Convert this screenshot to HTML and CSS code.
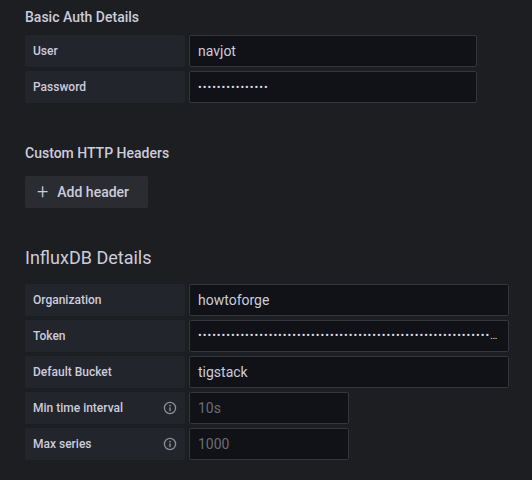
FILE: index.html
```html
<!DOCTYPE html>
<html>
<head>
<meta charset="utf-8">
<link rel="stylesheet" href="styles.css">
</head>
<body>
<div class="page">
  <h3 class="sub-title">Basic Auth Details</h3>
  <div class="rows">
    <div class="row">
      <div class="label">User</div>
      <div class="input w288">navjot</div>
    </div>
    <div class="row">
      <div class="label">Password</div>
      <div class="input w288 dots">•••••••••••••••</div>
    </div>
  </div>

  <h3 class="sub-title headers-title">Custom HTTP Headers</h3>
  <button class="btn"><span class="plus">+</span>Add header</button>

  <h2 class="section-title">InfluxDB Details</h2>
  <div class="rows">
    <div class="row">
      <div class="label">Organization</div>
      <div class="input w320">howtoforge</div>
    </div>
    <div class="row">
      <div class="label">Token</div>
      <div class="input w320 dots ellip">••••••••••••••••••••••••••••••••••••••••••••••••••••••••••••••••••••••••••••••••••••••</div>
    </div>
    <div class="row">
      <div class="label">Default Bucket</div>
      <div class="input w320">tigstack</div>
    </div>
    <div class="row">
      <div class="label">Min time interval
        <svg class="info" width="14" height="14" viewBox="0 0 14 14"><circle cx="7" cy="7" r="5.6" fill="none" stroke="currentColor" stroke-width="1.3"/><circle cx="7" cy="4.6" r="0.9" fill="currentColor"/><rect x="6.25" y="6.2" width="1.5" height="4" rx="0.6" fill="currentColor"/></svg>
      </div>
      <div class="input w160 placeholder">10s</div>
    </div>
    <div class="row">
      <div class="label">Max series
        <svg class="info" width="14" height="14" viewBox="0 0 14 14"><circle cx="7" cy="7" r="5.6" fill="none" stroke="currentColor" stroke-width="1.3"/><circle cx="7" cy="4.6" r="0.9" fill="currentColor"/><rect x="6.25" y="6.2" width="1.5" height="4" rx="0.6" fill="currentColor"/></svg>
      </div>
      <div class="input w160 placeholder">1000</div>
    </div>
  </div>
</div>
</body>
</html>
```

FILE: styles.css
```css
html, body {
  margin: 0;
  padding: 0;
  background: #1d1e22;
}
body {
  font-family: Roboto, "Liberation Sans", sans-serif;
  color: #ccccdc;
  width: 532px;
  height: 480px;
  overflow: hidden;
}
.page {
  padding: 8px 0 0 25px;
}
.sub-title {
  margin: 0 0 9px 0;
  font-size: 14px;
  line-height: 18px;
  font-weight: 500;
  color: #ccccdc;
}
.headers-title {
  margin-top: 41px;
  margin-bottom: 14px;
}
.section-title {
  margin: 38px 0 14px 0;
  font-size: 18px;
  line-height: 24px;
  font-weight: 400;
  color: #ccccdc;
}
.rows {
  display: flex;
  flex-direction: column;
  gap: 4px;
}
.row {
  display: flex;
  gap: 4px;
  height: 32px;
}
.label {
  box-sizing: border-box;
  width: 160px;
  height: 32px;
  padding: 0 8px;
  background: #22252b;
  border-radius: 2px;
  display: flex;
  align-items: center;
  justify-content: space-between;
  font-size: 12px;
  font-weight: 500;
  color: #ccccdc;
}
.info {
  color: #8e8e96;
}
.input {
  box-sizing: border-box;
  height: 32px;
  padding: 0 8px;
  background: #111217;
  border: 1px solid #35363b;
  border-radius: 2px;
  display: flex;
  align-items: center;
  font-size: 14px;
  color: #ccccdc;
  white-space: nowrap;
  overflow: hidden;
}
.w288 { width: 288px; }
.w320 { width: 320px; }
.w160 { width: 160px; }
.dots {
  font-size: 11px;
  letter-spacing: 1px;
  color: #dcdce4;
}
.ellip {
  display: block;
  line-height: 30px;
  text-overflow: ellipsis;
  padding-right: 6px;
}
.placeholder {
  color: #6c6d73;
}
.btn {
  box-sizing: border-box;
  height: 32px;
  width: 123px;
  padding: 0 12px;
  border: none;
  border-radius: 2px;
  background: #2b2c31;
  color: #ccccdc;
  font-family: Roboto, "Liberation Sans", sans-serif;
  font-size: 14px;
  font-weight: 500;
  display: flex;
  align-items: center;
  cursor: pointer;
}
.plus {
  font-size: 20px;
  font-weight: 300;
  margin-right: 9px;
  line-height: 1;
  margin-top: -2px;
}
```
